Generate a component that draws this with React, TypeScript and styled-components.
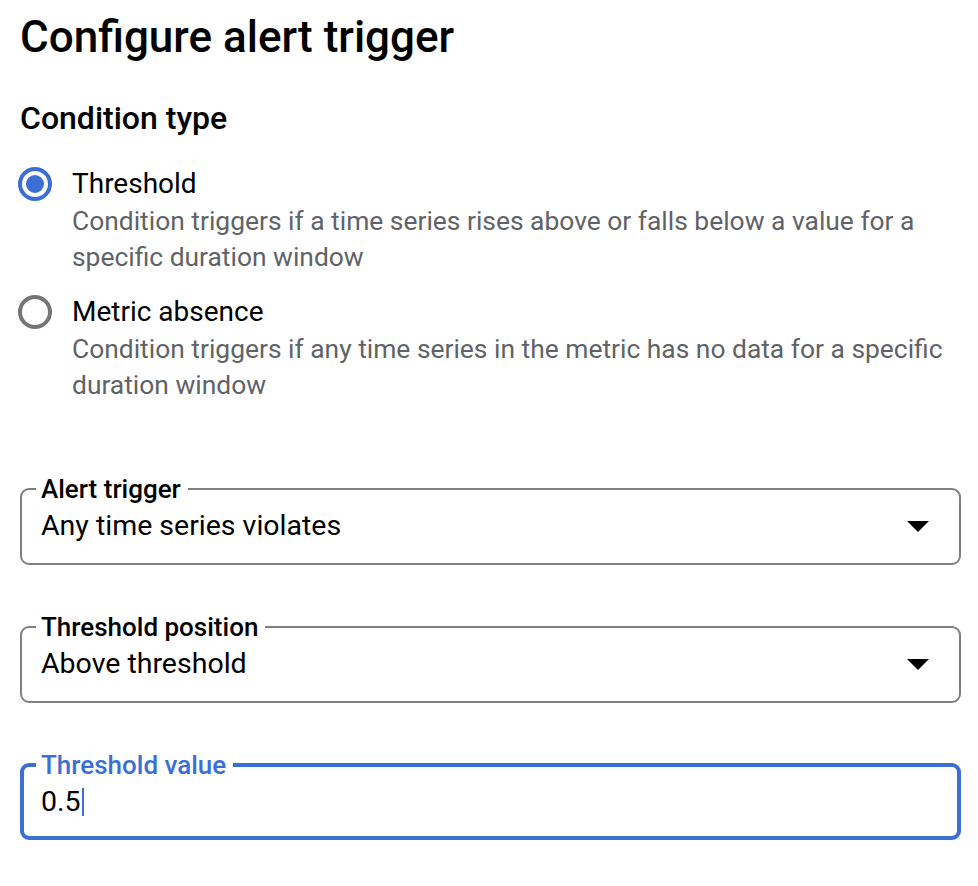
import React from 'react'
import styled, { createGlobalStyle } from 'styled-components'

const GlobalStyle = createGlobalStyle`
  html, body {
    margin: 0;
    padding: 0;
    background: #ffffff;
  }
  body {
    font-family: Roboto, 'Noto Sans', Arial, sans-serif;
    color: #202124;
  }
`

const Page = styled.div`
  width: 941px;
  padding: 11px 0 0 20px;
  display: flex;
  flex-direction: column;
`

const Title = styled.h1`
  margin: 0;
  font-size: 44px;
  line-height: 52px;
  font-weight: 500;
  color: #000;
`

const SectionTitle = styled.h2`
  margin: 35px 0 0;
  font-size: 32px;
  line-height: 40px;
  font-weight: 500;
  color: #000;
`

const RadioGroup = styled.div`
  display: flex;
  flex-direction: column;
  gap: 18px;
  margin-top: 27px;
`

const RadioRow = styled.label`
  display: grid;
  grid-template-columns: 52px 1fr;
  align-items: start;
  cursor: pointer;
`

const RadioCircle = styled.span<{ $checked?: boolean }>`
  width: 34px;
  height: 34px;
  box-sizing: border-box;
  border-radius: 50%;
  border: 4px solid ${({ $checked }) => ($checked ? '#3c6fd6' : '#757575')};
  margin-top: 2px;
  margin-left: -2px;
  display: flex;
  align-items: center;
  justify-content: center;

  &::after {
    content: '';
    width: 18px;
    height: 18px;
    border-radius: 50%;
    background: #3c6fd6;
    display: ${({ $checked }) => ($checked ? 'block' : 'none')};
  }
`

const RadioText = styled.div`
  display: flex;
  flex-direction: column;
`

const RadioLabel = styled.span`
  font-size: 28px;
  line-height: 38px;
  color: #000;
`

const RadioHint = styled.span`
  font-size: 26.4px;
  line-height: 36px;
  color: #5f6368;
`

const FieldStack = styled.div`
  display: flex;
  flex-direction: column;
  gap: 49px;
  margin-top: 73px;
`

const Field = styled.fieldset<{ $focused?: boolean }>`
  margin: 0;
  min-width: 0;
  box-sizing: border-box;
  height: ${({ $focused }) => ($focused ? '88px' : '89px')};
  padding: 6px 14px 0 ${({ $focused }) => ($focused ? '12px' : '14px')};
  border: ${({ $focused }) => ($focused ? '4px solid #3c6fd6' : '2px solid #7f7f7f')};
  border-radius: 9px;
  display: flex;
  align-items: center;
`

const Legend = styled.legend<{ $focused?: boolean }>`
  padding: 0 7px 0 5px;
  font-size: 26px;
  line-height: 26px;
  font-weight: 500;
  color: ${({ $focused }) => ($focused ? '#3c6fd6' : '#000')};
`

const FieldRow = styled.div`
  flex: 1;
  display: flex;
  align-items: center;
  justify-content: space-between;
  padding-left: 5px;
`

const Value = styled.span`
  font-size: 28.5px;
  line-height: 36px;
  color: #000;
`

const Caret = styled.span`
  display: inline-block;
  width: 2px;
  height: 28px;
  background: #3c6fd6;
  vertical-align: -5px;
  margin-left: 1px;
`

const Arrow = styled.span`
  width: 0;
  height: 0;
  border-left: 11px solid transparent;
  border-right: 11px solid transparent;
  border-top: 11px solid #000;
  margin-right: 16px;
`

interface SelectFieldProps {
  label: string
  value: string
}

const SelectField = ({ label, value }: SelectFieldProps) => (
  <Field>
    <Legend>{label}</Legend>
    <FieldRow>
      <Value>{value}</Value>
      <Arrow />
    </FieldRow>
  </Field>
)

export default function App() {
  return (
    <>
      <GlobalStyle />
      <Page>
        <Title>Configure alert trigger</Title>
        <SectionTitle>Condition type</SectionTitle>
        <RadioGroup>
          <RadioRow>
            <RadioCircle $checked />
            <RadioText>
              <RadioLabel>Threshold</RadioLabel>
              <RadioHint>
                Condition triggers if a time series rises above or falls below a value for a specific
                duration window
              </RadioHint>
            </RadioText>
          </RadioRow>
          <RadioRow>
            <RadioCircle />
            <RadioText>
              <RadioLabel>Metric absence</RadioLabel>
              <RadioHint>
                Condition triggers if any time series in the metric has no data for a specific duration
                window
              </RadioHint>
            </RadioText>
          </RadioRow>
        </RadioGroup>
        <FieldStack>
          <SelectField label="Alert trigger" value="Any time series violates" />
          <SelectField label="Threshold position" value="Above threshold" />
          <Field $focused>
            <Legend $focused>Threshold value</Legend>
            <FieldRow>
              <Value>
                0.5
                <Caret />
              </Value>
            </FieldRow>
          </Field>
        </FieldStack>
      </Page>
    </>
  )
}
